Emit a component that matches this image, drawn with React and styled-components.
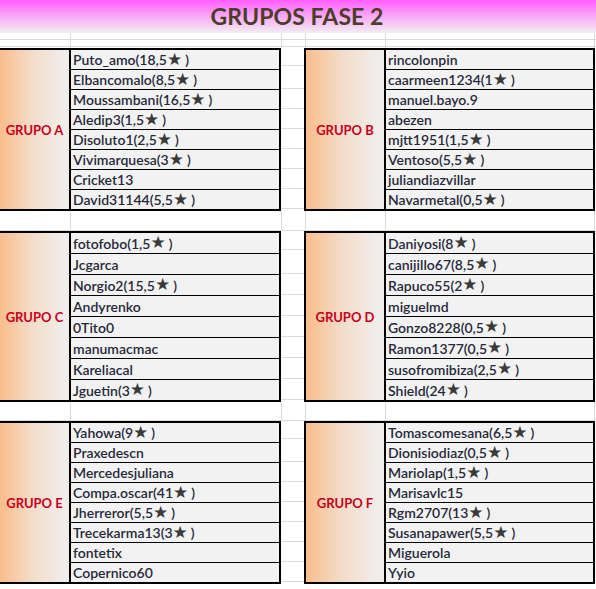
import React from "react";
import styled, { createGlobalStyle } from "styled-components";

const GRID = "#dadada";

const Global = createGlobalStyle`
  html, body { margin: 0; padding: 0; background: #ffffff; }
  body { overflow: hidden; font-family: Lato, "Liberation Sans", sans-serif; }
`;

const Sheet = styled.div`
  width: 596px;
  height: 589px;
  overflow: hidden;
  display: flex;
  flex-direction: column;
`;

const TitleBar = styled.div`
  height: 33px;
  display: flex;
  align-items: center;
  justify-content: center;
  background: linear-gradient(to bottom, #ff5cff 0%, #f9a3f5 45%, #f2eef2 100%);
`;

const Title = styled.h1`
  margin: 0;
  font-family: Lato, "Liberation Sans", sans-serif;
  font-weight: 700;
  font-size: 23px;
  color: #4a3d29;
  letter-spacing: 0.1px;
  line-height: 1;
  transform: translateX(-1px);
`;

const vlines = `
  linear-gradient(${GRID}, ${GRID}) 70px 0 / 1px 100% no-repeat,
  linear-gradient(${GRID}, ${GRID}) 281px 0 / 1px 100% no-repeat,
  linear-gradient(${GRID}, ${GRID}) 305px 0 / 1px 100% no-repeat,
  linear-gradient(${GRID}, ${GRID}) 385px 0 / 1px 100% no-repeat,
  linear-gradient(${GRID}, ${GRID}) 594px 0 / 1px 100% no-repeat
`;

const HeaderRows = styled.div`
  height: 15px;
  background:
    linear-gradient(${GRID}, ${GRID}) 0 6px / 100% 1px no-repeat,
    linear-gradient(${GRID}, ${GRID}) 0 13px / 100% 1px no-repeat,
    ${vlines};
`;

const GapRow = styled.div`
  height: ${(p) => p.$h}px;
  background:
    linear-gradient(${GRID}, ${GRID}) 0 ${(p) => p.$h - 1}px / 100% 1px no-repeat,
    ${vlines};
`;

const Band = styled.div`
  display: flex;
  align-items: stretch;
`;

const Table = styled.div`
  box-sizing: border-box;
  width: ${(p) => p.$w}px;
  margin-left: ${(p) => p.$offset || 0}px;
  border: 2px solid #000;
  display: grid;
  grid-template-columns: ${(p) => p.$label}px 1fr;
  flex: none;
`;

const Label = styled.div`
  box-sizing: border-box;
  border-right: 2px solid #000;
  display: flex;
  align-items: center;
  justify-content: center;
  background: linear-gradient(to right, #f9bd8b 0%, #f3dcc8 45%, #f1ebe6 85%, #efeeed 100%);
  color: #c8001e;
  font-family: Lato, "Liberation Sans", sans-serif;
  font-weight: 700;
  font-size: 13px;
  padding-top: 1px;
`;

const Names = styled.div`
  display: flex;
  flex-direction: column;
  background: #f2f2f2;
`;

const Row = styled.div`
  height: ${(p) => p.$h}px;
  display: flex;
  align-items: center;
  padding-left: 2px;
  font-family: Lato, "Liberation Sans", sans-serif;
  font-size: 14px;
  font-weight: 600;
  color: #27293a;
  white-space: nowrap;
  & + & { border-top: 1px solid #000; }
`;

const Star = styled.span`
  color: #3a3a3a;
  font-family: "DejaVu Sans", sans-serif;
  font-size: 17px;
  line-height: 1;
  margin: -1px 3px 0 0;
`;

const Gap = styled.div`
  width: 23px;
  flex: none;
  background: repeating-linear-gradient(
    to bottom,
    transparent 0,
    transparent ${(p) => p.$pitch - 1}px,
    ${GRID} ${(p) => p.$pitch - 1}px,
    ${GRID} ${(p) => p.$pitch}px
  );
  background-position: 0 ${(p) => 2 + p.$pitch - 1}px;
`;

const parse = (s) => {
  const m = s.match(/^(.*)\(([^)]*)\)$/);
  return m ? { name: m[1], stars: m[2] } : { name: s, stars: null };
};

const groups = {
  A: ["Puto_amo(18,5)", "Elbancomalo(8,5)", "Moussambani(16,5)", "Aledip3(1,5)", "Disoluto1(2,5)", "Vivimarquesa(3)", "Cricket13", "David31144(5,5)"],
  B: ["rincolonpin", "caarmeen1234(1)", "manuel.bayo.9", "abezen", "mjtt1951(1,5)", "Ventoso(5,5)", "juliandiazvillar", "Navarmetal(0,5)"],
  C: ["fotofobo(1,5)", "Jcgarca", "Norgio2(15,5)", "Andyrenko", "0Tito0", "manumacmac", "Kareliacal", "Jguetin(3)"],
  D: ["Daniyosi(8)", "canijillo67(8,5)", "Rapuco55(2)", "miguelmd", "Gonzo8228(0,5)", "Ramon1377(0,5)", "susofromibiza(2,5)", "Shield(24)"],
  E: ["Yahowa(9)", "Praxedescn", "Mercedesjuliana", "Compa.oscar(41)", "Jherreror(5,5)", "Trecekarma13(3)", "fontetix", "Copernico60"],
  F: ["Tomascomesana(6,5)", "Dionisiodiaz(0,5)", "Mariolap(1,5)", "Marisavlc15", "Rgm2707(13)", "Susanapawer(5,5)", "Miguerola", "Yyio"],
};

function Group({ id, side, rowH }) {
  const left = side === "left";
  return (
    <Table $w={left ? 283 : 291} $label={left ? 71 : 80} $offset={left ? -2 : 0}>
      <Label>GRUPO {id}</Label>
      <Names>
        {groups[id].map((entry) => {
          const { name, stars } = parse(entry);
          return (
            <Row key={entry} $h={rowH}>
              {name}
              {stars !== null && (
                <>
                  ({stars}
                  <Star>★</Star>)
                </>
              )}
            </Row>
          );
        })}
      </Names>
    </Table>
  );
}

function GroupBand({ l, r, rowH }) {
  return (
    <Band>
      <Group id={l} side="left" rowH={rowH} />
      <Gap $pitch={rowH + 1} />
      <Group id={r} side="right" rowH={rowH} />
    </Band>
  );
}

export default function App() {
  return (
    <Sheet>
      <Global />
      <TitleBar>
        <Title>GRUPOS FASE 2</Title>
      </TitleBar>
      <HeaderRows />
      <GroupBand l="A" r="B" rowH={19} />
      <GapRow $h={20} />
      <GroupBand l="C" r="D" rowH={20} />
      <GapRow $h={19} />
      <GroupBand l="E" r="F" rowH={19} />
    </Sheet>
  );
}
